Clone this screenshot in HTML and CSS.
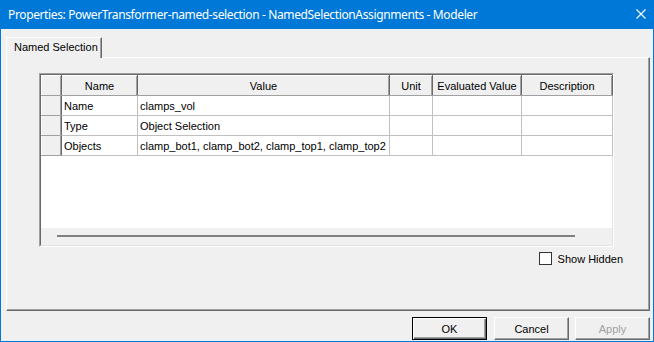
FILE: index.html
```html
<!DOCTYPE html>
<html lang="en">
<head>
  <meta charset="UTF-8">
  <title>Properties - Modeler</title>
  <link rel="stylesheet" href="styles.css">
</head>
<body>

  <div class="window">
    <div class="titlebar">
      <span class="title">Properties: PowerTransformer-named-selection - NamedSelectionAssignments - Modeler</span>
      <svg class="close" width="10" height="10" viewBox="0 0 10 10">
        <path d="M0.5 0.5 L9.5 9.5 M9.5 0.5 L0.5 9.5" stroke="#fff" stroke-width="1.1" fill="none"/>
      </svg>
    </div>

    <div class="content">
      <div class="tabs">
        <div class="tab">Named Selection</div>
      </div>

      <div class="panel">
        <div class="grid">
          <div class="grid-inner">
            <table class="props">
              <colgroup>
                <col style="width:20px">
                <col style="width:76px">
                <col style="width:252px">
                <col style="width:43px">
                <col style="width:89px">
                <col style="width:91px">
              </colgroup>
              <thead>
                <tr>
                  <th></th>
                  <th>Name</th>
                  <th>Value</th>
                  <th>Unit</th>
                  <th>Evaluated Value</th>
                  <th>Description</th>
                </tr>
              </thead>
              <tbody>
                <tr>
                  <th></th>
                  <td>Name</td>
                  <td>clamps_vol</td>
                  <td></td><td></td><td></td>
                </tr>
                <tr>
                  <th></th>
                  <td>Type</td>
                  <td>Object Selection</td>
                  <td></td><td></td><td></td>
                </tr>
                <tr>
                  <th></th>
                  <td>Objects</td>
                  <td>clamp_bot1, clamp_bot2, clamp_top1, clamp_top2</td>
                  <td></td><td></td><td></td>
                </tr>
              </tbody>
            </table>
            <div class="empty"></div>
            <div class="hscroll"><div class="thumb"></div></div>
          </div>
        </div>

        <div class="options">
          <label class="check"><span class="box"></span>Show Hidden</label>
        </div>
      </div>

      <div class="buttons">
        <button class="btn default">OK</button>
        <button class="btn">Cancel</button>
        <button class="btn disabled">Apply</button>
      </div>
    </div>
  </div>

</body>
</html>
```

FILE: styles.css
```css
* {
  box-sizing: border-box;
}

body {
  margin: 0;
  font-family: "Liberation Sans", Arial, sans-serif;
  font-size: 11px;
  color: #000;
}

.window {
  width: 654px;
  height: 342px;
  background: #f0f0f0;
  border: 1px solid #0078d7;
  border-top: none;
  display: flex;
  flex-direction: column;
}

.titlebar {
  height: 29px;
  margin: 0 -1px;
  background: #0078d7;
  color: #fff;
  display: flex;
  align-items: center;
  padding: 0 8px 0 8px;
}

.title {
  flex: 1;
  font-family: "Noto Sans", sans-serif;
  font-size: 12px;
  letter-spacing: -0.37px;
}

.close {
  margin-right: 0;
  margin-top: -1px;
}

.content {
  flex: 1;
  padding: 8px 3px 0 5px;
  display: flex;
  flex-direction: column;
}

.tabs {
  display: flex;
  height: 20px;
}

.tab {
  position: relative;
  width: 96px;
  height: 21px;
  background: #f0f0f0;
  border-top: 1px solid #fff;
  border-left: 1px solid #fff;
  border-right: 1px solid #696969;
  box-shadow: inset -1px 0 0 #a0a0a0;
  padding: 3px 0 0 7px;
  z-index: 1;
}

.panel {
  height: 254px;
  border-top: 1px solid #fff;
  border-left: 1px solid #fff;
  border-right: 1px solid #696969;
  border-bottom: 1px solid #696969;
  box-shadow: inset -1px -1px 0 #a0a0a0;
  padding: 15px 0 0 32px;
}

.grid {
  width: 575px;
  border-top: 1px solid #a0a0a0;
  border-left: 1px solid #a0a0a0;
  border-right: 1px solid #fff;
  border-bottom: 1px solid #fff;
}

.grid-inner {
  height: 172px;
  background: #fff;
  border-top: 1px solid #696969;
  border-left: 1px solid #696969;
  border-right: 1px solid #e3e3e3;
  border-bottom: 1px solid #e3e3e3;
  display: flex;
  flex-direction: column;
}

.props {
  border-collapse: collapse;
  table-layout: fixed;
  width: 571px;
}

.props th {
  height: 20px;
  padding: 0;
  font-weight: normal;
  text-align: center;
  background: #f0f0f0;
  border-top: 1px solid #fff;
  border-left: 1px solid #fff;
  border-right: 1px solid #696969;
  border-bottom: 1px solid #a0a0a0;
  box-shadow: inset -1px 0 0 #a0a0a0;
}

.props td {
  height: 20px;
  padding: 0 0 0 2px;
  border: 1px solid #c0c0c0;
  border-top: none;
  white-space: nowrap;
  overflow: hidden;
}

.empty {
  flex: 1;
}

.hscroll {
  height: 17px;
  background: #f0f0f0;
  padding: 7px 0 0 16px;
}

.thumb {
  width: 518px;
  height: 2px;
  background: #808080;
}

.options {
  display: flex;
  justify-content: flex-end;
  padding: 5px 26px 0 0;
}

.check {
  display: flex;
  align-items: center;
  height: 13px;
}

.box {
  width: 13px;
  height: 13px;
  background: #fff;
  border: 1px solid #333;
  margin-right: 6px;
}

.buttons {
  display: flex;
  justify-content: flex-end;
  gap: 6px;
  padding-top: 6px;
  padding-right: 0;
}

.btn {
  width: 75px;
  height: 23px;
  font-family: "Liberation Sans", Arial, sans-serif;
  font-size: 11px;
  color: #000;
  background: #f0f0f0;
  border-top: 1px solid #fff;
  border-left: 1px solid #fff;
  border-right: 1px solid #696969;
  border-bottom: 1px solid #696969;
  box-shadow: inset -1px -1px 0 #a0a0a0;
  padding: 0;
}

.btn.default {
  border: 1px solid #000;
  box-shadow: inset 1px 1px 0 #fff, inset -1px -1px 0 #696969, inset -2px -2px 0 #a0a0a0;
  margin-right: 1px;
}

.btn.disabled {
  color: #a0a0a0;
}
```
